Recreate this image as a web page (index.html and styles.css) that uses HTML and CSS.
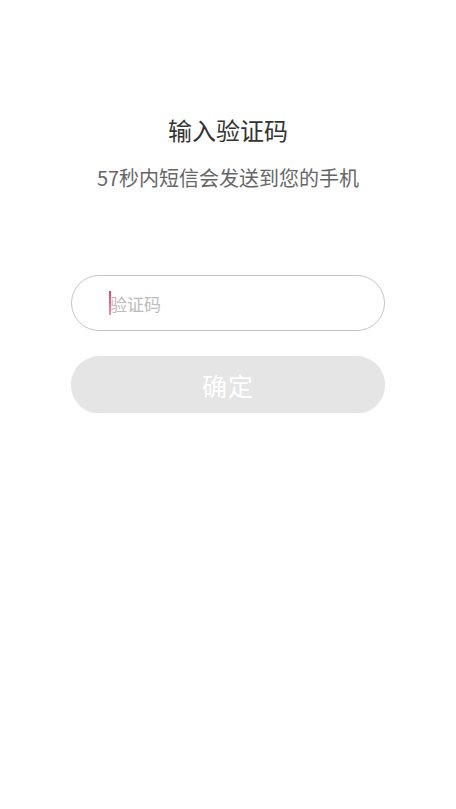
FILE: index.html
```html
<!DOCTYPE html>
<html lang="zh-CN">
<head>
	<meta charset="UTF-8">
	<title>输入验证码</title>
	<link rel="stylesheet" href="styles.css">
</head>
<body>
	<div class="page">
		<h1 class="title">输入验证码</h1>
		<p class="subtitle">57秒内短信会发送到您的手机</p>
		<form class="form">
			<div class="field">
				<span class="caret"></span>
				<input type="text" class="code-input" placeholder="验证码">
			</div>
			<button type="button" class="submit">确定</button>
		</form>
	</div>
</body>
</html>
```

FILE: styles.css
```css
html, body {
	margin: 0;
	padding: 0;
	background: #fff;
}
body {
	font-family: "Noto Sans CJK SC", "Noto Sans", sans-serif;
}
.page {
	width: 314px;
	margin: 0 auto;
	padding-top: 113px;
}
.title {
	margin: 0;
	font-size: 24px;
	font-weight: normal;
	line-height: 34px;
	color: #333;
	text-align: center;
}
.subtitle {
	margin: 16px 0 0 0;
	font-size: 20px;
	line-height: 30px;
	color: #666;
	text-align: center;
}
.form {
	margin-top: 82px;
}
.field {
	display: flex;
	align-items: center;
	height: 54px;
	border: 1px solid #c4c4c4;
	border-radius: 28px;
	padding-left: 37px;
}
.caret {
	width: 2px;
	height: 24px;
	background: linear-gradient(#e2407a, #f58fb0);
}
.code-input {
	border: 0;
	outline: none;
	padding: 0;
	margin: 0 0 0 -1px;
	flex: 1;
	font-family: inherit;
	font-size: 17px;
	color: #333;
	background: transparent;
}
.code-input::placeholder {
	color: #bcbcbc;
}
.submit {
	display: block;
	width: 100%;
	height: 57px;
	margin-top: 25px;
	border: 0;
	border-radius: 29px;
	background: #e5e5e5;
	box-shadow: 0 1px 1px rgba(0,0,0,0.08);
	color: #fff;
	font-family: inherit;
	font-size: 25px;
	letter-spacing: 1px;
}
```
